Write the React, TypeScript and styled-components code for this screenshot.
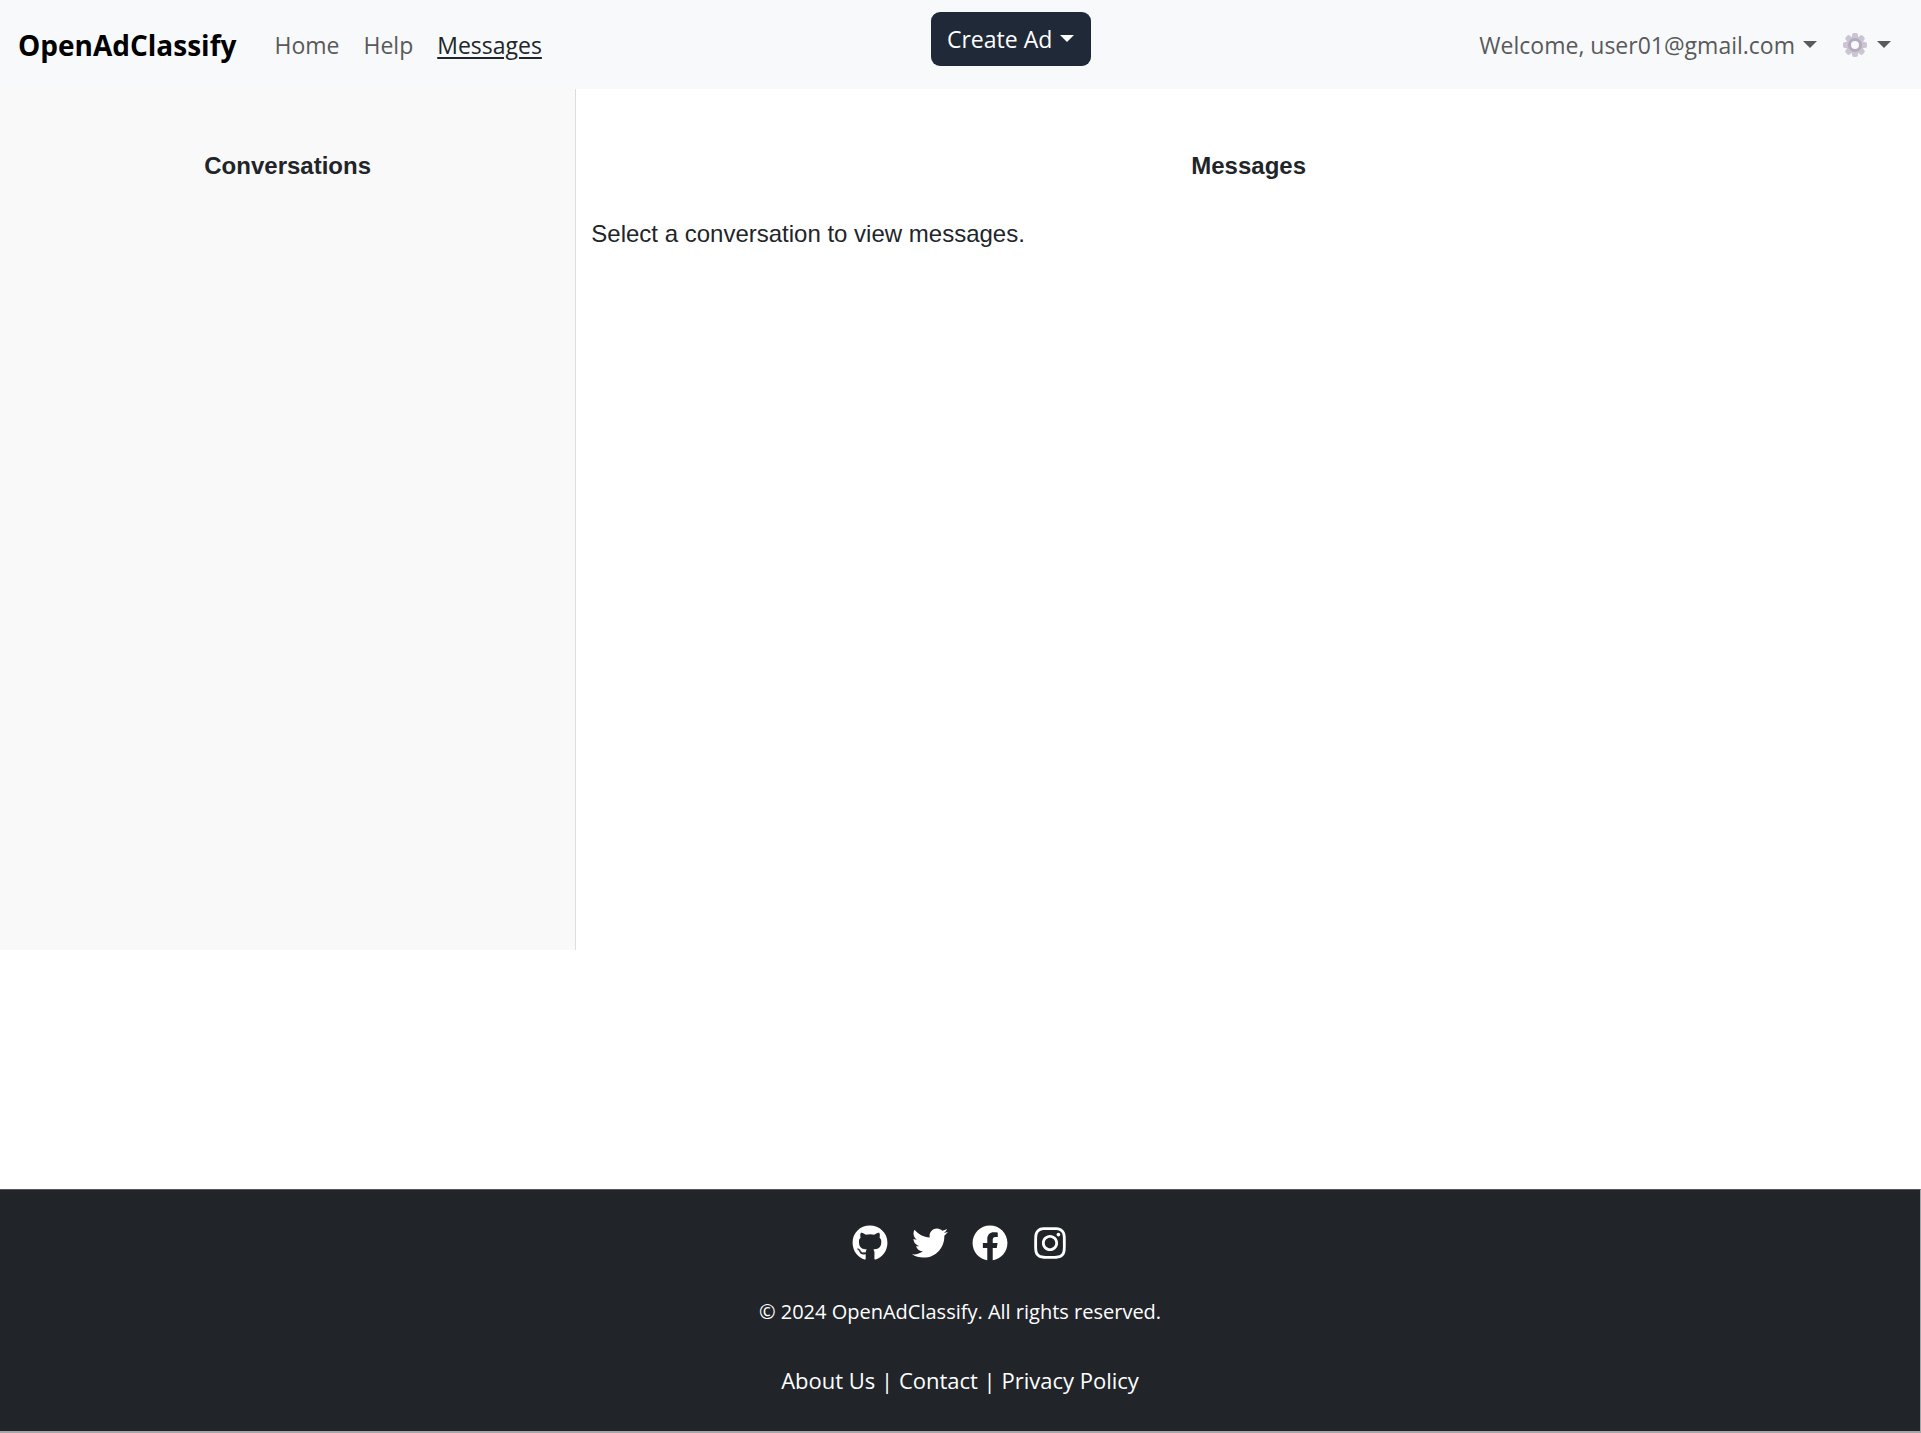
import React from "react";
import styled, { createGlobalStyle } from "styled-components";
import { FaGithub, FaTwitter, FaFacebook, FaInstagram } from "react-icons/fa";

const uiFont = `"Open Sans", "Noto Sans", sans-serif`;
const chatFont = `"Liberation Sans", Arial, sans-serif`;

const GlobalStyle = createGlobalStyle`
  *, *::before, *::after { box-sizing: border-box; }
  body { margin: 0; background: #fff; color: #212529; font: 24px/36px ${uiFont}; }
  a { color: inherit; }
`;

const Page = styled.div`
  display: flex;
  flex-direction: column;
  min-height: 100vh;
`;

const Navbar = styled.nav`
  display: flex;
  align-items: center;
  height: 89px;
  padding: 0 18px;
  background: #f8f9fa;
`;

const Brand = styled.a`
  margin-right: 26px;
  color: #000;
  font-size: 28px;
  font-weight: 700;
  text-decoration: none;
`;

const NavList = styled.div`
  display: flex;
  align-items: center;
`;

const NavLink = styled.a<{ $active?: boolean }>`
  padding: 0 12px;
  font-size: 23px;
  color: ${(p) => (p.$active ? "#212529" : "#595a5b")};
  text-decoration: ${(p) => (p.$active ? "underline" : "none")};
  text-decoration-thickness: 2px;
  text-underline-offset: 3px;
`;

const Caret = styled.span`
  display: inline-block;
  flex: none;
  border: 7px solid transparent;
  border-top-color: currentColor;
  border-bottom: 0;
`;

const CreateButton = styled.button`
  display: flex;
  align-items: center;
  justify-content: center;
  gap: 8px;
  width: 160px;
  height: 54px;
  margin: 0 auto 12px;
  padding: 0;
  border: 0;
  border-radius: 9px;
  background: #1f2937;
  color: #fff;
  font: 400 23px/36px ${uiFont};
`;

const MenuButton = styled.button`
  display: flex;
  align-items: center;
  gap: 8px;
  padding: 0 12px;
  border: 0;
  background: none;
  color: #595a5b;
  font: 400 23px/36px ${uiFont};
`;

const Chat = styled.main`
  display: grid;
  grid-template-columns: 30% 1fr;
  height: 60.1vh;
  font-family: ${chatFont};
`;

const Sidebar = styled.aside`
  padding: 59px 15px;
  border-right: 1px solid #ddd;
  background: #f9f9f9;
`;

const Thread = styled.section`
  padding: 59px 15px;
`;

const PanelTitle = styled.h2`
  margin: 0 0 32px;
  font-size: 24px;
  line-height: 36px;
  font-weight: 700;
  text-align: center;
`;

const Hint = styled.p`
  margin: 0;
`;

const Footer = styled.footer`
  display: flex;
  flex-direction: column;
  align-items: center;
  margin-top: auto;
  padding: 35px 0 33px;
  border: 0 solid #a5a6a8;
  border-width: 1px 1px 2px 0;
  border-top-color: #55585b;
  background: #212529;
  color: #fff;
`;

const Socials = styled.div`
  display: flex;
  gap: 24px;
  margin-bottom: 33px;

  a { display: flex; }
`;

const Copyright = styled.p`
  margin: 0 0 32px;
  font-size: 20px;
  line-height: 36px;
`;

const FooterLinks = styled.div`
  font-size: 22px;

  a { text-decoration: none; }
`;

const GearIcon = styled.svg`
  margin: 0 2px;
`;

const teeth = [0, 45, 90, 135];

function Gear() {
  return (
    <GearIcon width="24" height="24" viewBox="0 0 24 24" aria-hidden="true">
      <g fill="#cbc5d3">
        {teeth.map((angle) => (
          <rect key={angle} x="9" y="0" width="6" height="24" rx="2" transform={`rotate(${angle} 12 12)`} />
        ))}
        <circle cx="12" cy="12" r="9" />
      </g>
      <circle cx="12" cy="12" r="5.5" fill="#f8f9fa" stroke="#b4abbf" strokeWidth="3" />
    </GearIcon>
  );
}

const socials = [
  { name: "GitHub", Icon: FaGithub },
  { name: "Twitter", Icon: FaTwitter },
  { name: "Facebook", Icon: FaFacebook },
  { name: "Instagram", Icon: FaInstagram },
];

export default function App() {
  return (
    <Page>
      <GlobalStyle />
      <Navbar>
        <Brand href="#">OpenAdClassify</Brand>
        <NavList>
          <NavLink href="#">Home</NavLink>
          <NavLink href="#">Help</NavLink>
          <NavLink href="#" $active>Messages</NavLink>
        </NavList>
        <CreateButton type="button">Create Ad<Caret /></CreateButton>
        <NavList>
          <MenuButton type="button">Welcome, user01@gmail.com<Caret /></MenuButton>
          <MenuButton type="button" aria-label="Settings"><Gear /><Caret /></MenuButton>
        </NavList>
      </Navbar>
      <Chat>
        <Sidebar>
          <PanelTitle>Conversations</PanelTitle>
        </Sidebar>
        <Thread>
          <PanelTitle>Messages</PanelTitle>
          <Hint>Select a conversation to view messages.</Hint>
        </Thread>
      </Chat>
      <Footer>
        <Socials>
          {socials.map(({ name, Icon }) => (
            <a key={name} href="#" aria-label={name}><Icon size={36} /></a>
          ))}
        </Socials>
        <Copyright>© 2024 OpenAdClassify. All rights reserved.</Copyright>
        <FooterLinks>
          <a href="#">About Us</a> | <a href="#">Contact</a> | <a href="#">Privacy Policy</a>
        </FooterLinks>
      </Footer>
    </Page>
  );
}
